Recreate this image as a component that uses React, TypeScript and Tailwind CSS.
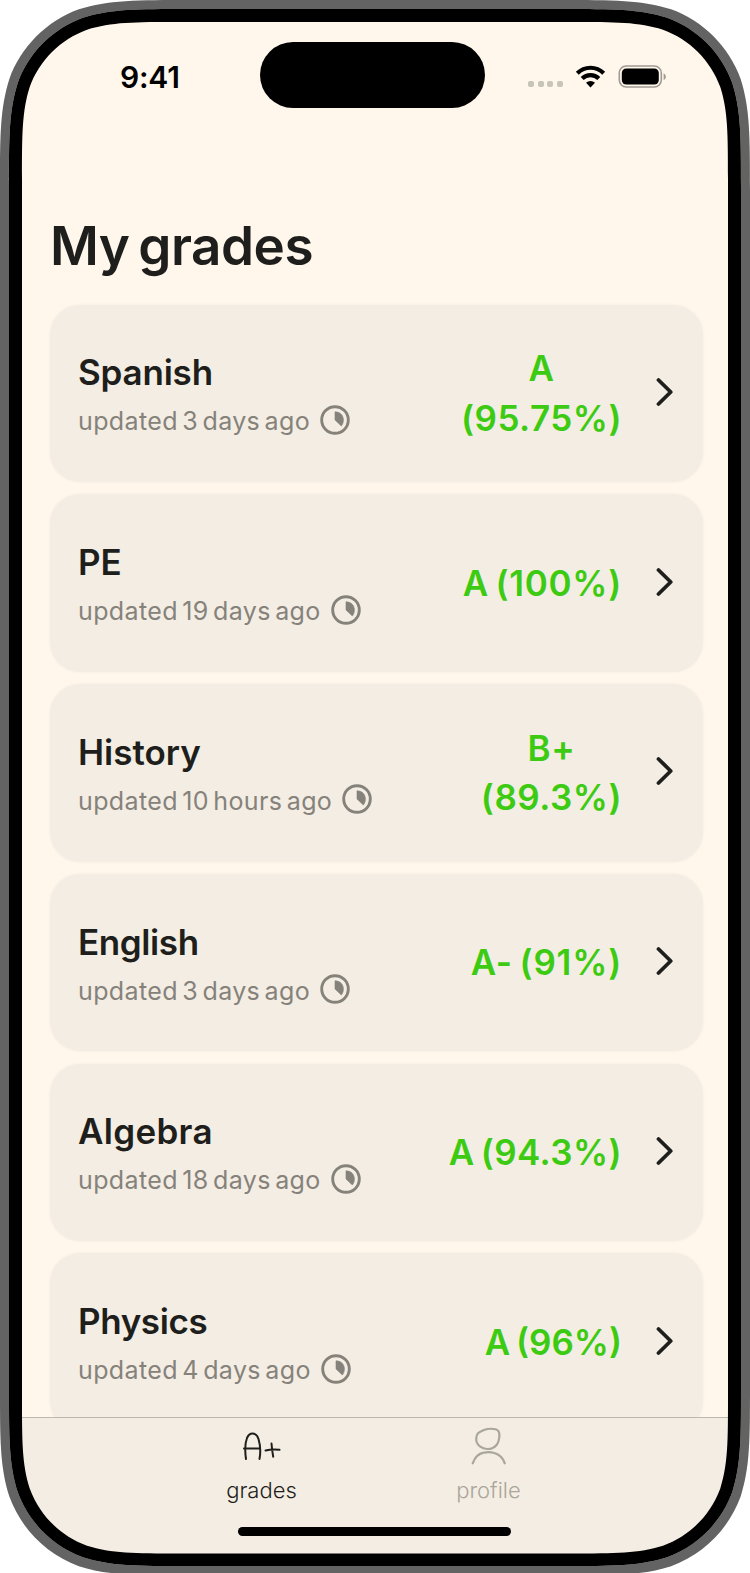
import React from "react";

type Grade = {
  name: string;
  nameClass: string;
  updated: string;
  grade: string[];
  gradeClass: string;
};

const grades: Grade[] = [
  { name: "Spanish", nameClass: "tracking-[-0.2px]", updated: "updated 3 days ago", grade: ["A", "(95.75%)"], gradeClass: "tracking-[0.5px]" },
  { name: "PE", nameClass: "tracking-[-0.2px]", updated: "updated 19 days ago", grade: ["A (100%)"], gradeClass: "tracking-[0.7px] [word-spacing:-3px]" },
  { name: "History", nameClass: "tracking-[0px]", updated: "updated 10 hours ago", grade: ["B+", "(89.3%)"], gradeClass: "tracking-[0.5px]" },
  { name: "English", nameClass: "tracking-[-0.4px]", updated: "updated 3 days ago", grade: ["A- (91%)"], gradeClass: "tracking-[0.8px] [word-spacing:-3px]" },
  { name: "Algebra", nameClass: "tracking-[0.3px]", updated: "updated 18 days ago", grade: ["A (94.3%)"], gradeClass: "tracking-[0.4px] [word-spacing:-3px]" },
  { name: "Physics", nameClass: "tracking-[-0.4px]", updated: "updated 4 days ago", grade: ["A (96%)"], gradeClass: "tracking-[0px] [word-spacing:-3px]" },
];

// Rounded rectangle with continuous-curvature corners.
function squircle(x: number, y: number, w: number, h: number, r: number) {
  const a = 1.52866 * r, b = 1.08849 * r, c = 0.86841 * r, d = 0.63149 * r;
  const e = 0.07491 * r, f = 0.37282 * r, g = 0.16906 * r;
  const R = x + w, B = y + h;
  return [
    `M${x + a} ${y}H${R - a}`,
    `C${R - b} ${y} ${R - c} ${y} ${R - d} ${y + e}`,
    `C${R - f} ${y + g} ${R - g} ${y + f} ${R - e} ${y + d}`,
    `C${R} ${y + c} ${R} ${y + b} ${R} ${y + a}V${B - a}`,
    `C${R} ${B - b} ${R} ${B - c} ${R - e} ${B - d}`,
    `C${R - g} ${B - f} ${R - f} ${B - g} ${R - d} ${B - e}`,
    `C${R - c} ${B} ${R - b} ${B} ${R - a} ${B}H${x + a}`,
    `C${x + b} ${B} ${x + c} ${B} ${x + d} ${B - e}`,
    `C${x + f} ${B - g} ${x + g} ${B - f} ${x + e} ${B - d}`,
    `C${x} ${B - c} ${x} ${B - b} ${x} ${B - a}V${y + a}`,
    `C${x} ${y + b} ${x} ${y + c} ${x + e} ${y + d}`,
    `C${x + g} ${y + f} ${x + f} ${y + g} ${x + d} ${y + e}`,
    `C${x + c} ${y} ${x + b} ${y} ${x + a} ${y}Z`,
  ].join("");
}

const outer = squircle(0, 0, 750, 1575.5, 125);
const bezel = squircle(9, 9, 732, 1557, 117);
const screen = squircle(22, 22, 706, 1531.5, 103);

function DeviceFrame() {
  return (
    <svg className="pointer-events-none absolute inset-0" width="750" height="1573" viewBox="0 0 750 1573" fillRule="evenodd">
      <path d={`M0 0H750V1576H0Z${outer}`} fill="#fff" />
      <path d={outer + bezel} fill="#636363" />
      <path d={bezel + screen} fill="#000" />
    </svg>
  );
}

function StatusBar() {
  return (
    <header className="flex h-[110px] items-start pt-[42px]">
      <div className="w-[260px] pl-[120px] pt-[17px] text-[30px] leading-[36px] font-semibold tracking-[-0.2px] text-black">9:41</div>
      <div className="h-[66px] w-[225px] rounded-full bg-black" />
      <div className="flex pt-[22px] pl-[43px]">
        <div className="flex gap-[3.5px] pt-[17px]">
          {[0, 1, 2, 3].map((i) => (
            <span key={i} className="size-[6px] rounded-[2px] bg-[#c8c4b8]" />
          ))}
        </div>
        <svg className="ml-[12px]" width="31" height="24" viewBox="0 0 31 24" fill="none" stroke="#000" strokeWidth="4.2">
          <path d="M2.3 9.2a18.7 18.7 0 0 1 26.4 0" />
          <path d="M7.2 14.6a11.8 11.8 0 0 1 16.6 0" />
          <path d="M15.5 23.5 11 18.8a6.5 6.5 0 0 1 9 0Z" fill="#000" stroke="none" />
        </svg>
        <svg className="ml-[11px]" width="50" height="26" viewBox="0 0 50 26">
          <rect x="2.3" y="2" width="42" height="21" rx="7" fill="none" stroke="#a19a92" strokeWidth="1.6" />
          <rect x="4.8" y="4.5" width="37" height="16" rx="4.5" fill="#000" />
          <path d="M46.6 9.2c3 1.4 3 5.4 0 6.8Z" fill="#a19a92" />
        </svg>
      </div>
    </header>
  );
}

function ProgressIcon() {
  return (
    <svg width="30" height="30" viewBox="0 0 30 30">
      <circle cx="15" cy="15" r="13.3" fill="none" stroke="#85827b" strokeWidth="2.9" />
      <path d="M15 6.8c4.8 0 8.4 3.5 8.4 8.2 0 2.4-.8 4.6-2.1 6L15 15Z" fill="#85827b" stroke="#85827b" strokeWidth=".6" strokeLinejoin="round" />
    </svg>
  );
}

function GradeCard({ item }: { item: Grade }) {
  return (
    <li className="flex h-[177.5px] shrink-0 items-center rounded-[30px] bg-[#f4ede3] pr-[26.5px] pl-[28px] shadow-[0_0_3px_rgba(120,90,60,0.06)]">
      <div className="flex-1 pt-[7px]">
        <h2 className={`text-[35px] leading-[46px] font-semibold text-[#1e1f1c] ${item.nameClass}`}>{item.name}</h2>
        <div className="mt-[3px] flex items-center gap-[10px]">
          <span className="text-[25px] leading-[46px] tracking-[0.37px] text-[#85827b] [word-spacing:-3px]">{item.updated}</span>
          <span className="mb-[3px]"><ProgressIcon /></span>
        </div>
      </div>
      <div className={`pt-[1px] text-center text-[35px] leading-[49.5px] font-semibold whitespace-nowrap text-[#3ccb12] ${item.gradeClass}`}>
        {item.grade.map((line) => (
          <div key={line}>{line}</div>
        ))}
      </div>
      <svg className="mb-[3px] ml-[34px]" width="20" height="32" viewBox="0 0 20 32" fill="none" stroke="#1e1f1c" strokeWidth="3.8" strokeLinecap="round" strokeLinejoin="round">
        <path d="M2.5 4 14.7 16 2.5 28" />
      </svg>
    </li>
  );
}

function TabBar() {
  return (
    <nav className="flex h-[137px] shrink-0 flex-col items-center border-t border-[#bcb9ae] bg-[#f4ede3]">
      <div className="flex h-[109px] w-full justify-center gap-[137px]">
        <div className="flex w-[90px] flex-col items-center">
          <svg className="mt-[13px] mr-[1px]" width="40" height="32" viewBox="0 0 40 32" fill="none" stroke="#1e1f1c" strokeWidth="2" strokeLinecap="round" strokeLinejoin="round">
            <path d="M5 28C4 21 4 12 6 7 7.5 3.5 9 2.5 11.5 2.5c3 0 5 2 6 5.5 1.5 5 2.3 13 1 20M3 17.5h16" />
            <path d="M24.5 19.5c4-1 9-1.3 14-.7M30.5 12.5c.3 4 .9 9 1.7 13.3" />
          </svg>
          <span className="mt-[12px] text-[22px] leading-[30px] font-[350] text-[#1e1f1c]">grades</span>
        </div>
        <div className="flex w-[90px] flex-col items-center">
          <svg className="mt-[9px]" width="36" height="38" viewBox="0 0 36 38" fill="none" stroke="#a9a69b" strokeWidth="2.2" strokeLinecap="round" strokeLinejoin="round">
            <path d="M13 3C17 1.500 21 1.500 24.500 2.300c3 .8 4 3 3.900 6-.1 3.700-.7 7-2.900 9.700-2.500 3-6 4.200-9.500 4C11 21.700 6.500 18.500 5.500 14.500 5 11.500 5 8.500 7 6.300 8.500 4.800 11 4 13 3Z" />
            <path d="M1.700 36.300C4 30 8.500 26.500 12.500 25.700c3-.7 7-.7 10 0 5 1.300 9.500 5 11.300 10.600" />
          </svg>
          <span className="mt-[10px] text-[22px] leading-[30px] font-[350] text-[#a9a69b]">profile</span>
        </div>
      </div>
      <div className="mr-[2px] h-[9px] w-[273px] rounded-full bg-black" />
    </nav>
  );
}

export default function App() {
  return (
    <div className="relative flex h-[1573px] w-[750px] flex-col overflow-hidden bg-[#fff7ec] pb-[19px] font-['Inter',sans-serif]">
      <StatusBar />
      <main className="flex min-h-0 flex-1 flex-col overflow-hidden pt-[101px] pr-[47.5px] pl-[50px]">
        <h1 className="h-[93.5px] shrink-0 text-[53px] leading-[70px] font-[640] tracking-[-0.5px] text-[#1e1f1c] [word-spacing:-4px]">My grades</h1>
        <ul className="flex flex-col gap-[12.3px]">
          {grades.map((g) => (
            <GradeCard key={g.name} item={g} />
          ))}
        </ul>
      </main>
      <TabBar />
      <DeviceFrame />
    </div>
  );
}
